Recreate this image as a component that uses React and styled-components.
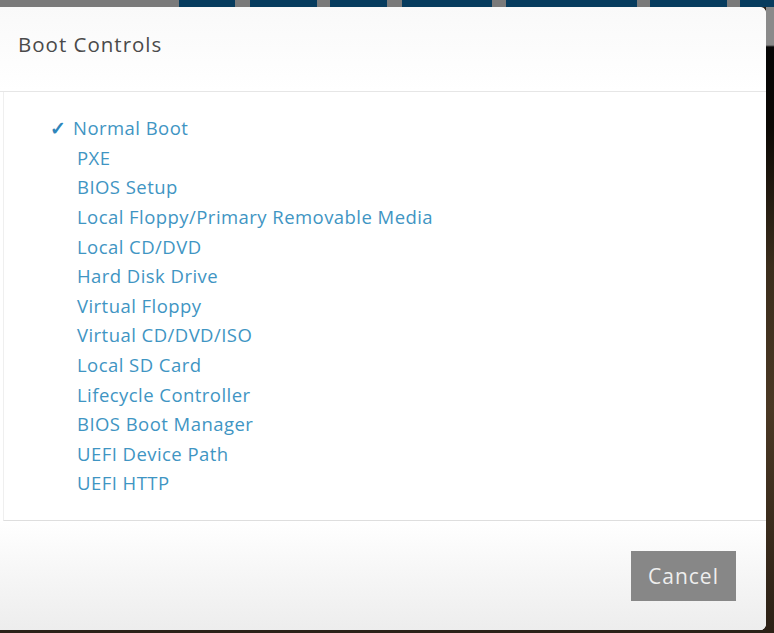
import React from "react";
import styled, { createGlobalStyle } from "styled-components";

const GlobalStyle = createGlobalStyle`
  html, body {
    margin: 0;
    padding: 0;
    background: #2a2118;
    font-family: "Open Sans", "Lato", sans-serif;
  }
`;

const tabs = [
  { w: 179, blue: false },
  { w: 56, blue: true },
  { w: 15, blue: false },
  { w: 67, blue: true },
  { w: 13, blue: false },
  { w: 57, blue: true },
  { w: 15, blue: false },
  { w: 90, blue: true },
  { w: 14, blue: false },
  { w: 131, blue: true },
  { w: 13, blue: false },
  { w: 77, blue: true },
  { w: 13, blue: false },
  { w: 34, blue: true },
];

const options = [
  "Normal Boot",
  "PXE",
  "BIOS Setup",
  "Local Floppy/Primary Removable Media",
  "Local CD/DVD",
  "Hard Disk Drive",
  "Virtual Floppy",
  "Virtual CD/DVD/ISO",
  "Local SD Card",
  "Lifecycle Controller",
  "BIOS Boot Manager",
  "UEFI Device Path",
  "UEFI HTTP",
];

const App = () => {
  const selected = "Normal Boot";

  return (
    <StyledPage>
      <GlobalStyle />
      <StyledTopStrip>
        {tabs.map((t, i) => (
          <StyledTab key={i} blue={t.blue} style={{ width: t.w }} />
        ))}
      </StyledTopStrip>

      <StyledStage>
        <StyledDialog>
          <StyledHeader>
            <StyledTitle>Boot Controls</StyledTitle>
          </StyledHeader>

          <StyledBody>
            {options.map((name) => (
              <StyledOption key={name}>
                <StyledMark checked={name === selected}>
                  {name === selected ? "✓" : ""}
                </StyledMark>
                {name}
              </StyledOption>
            ))}
          </StyledBody>

          <StyledFooter>
            <StyledCancel>Cancel</StyledCancel>
          </StyledFooter>
        </StyledDialog>
        <StyledSide />
      </StyledStage>
    </StyledPage>
  );
};
export default App;

const StyledPage = styled.div`
  width: 774px;
  height: 633px;
  overflow: hidden;
  display: flex;
  flex-direction: column;
`;

const StyledTopStrip = styled.div`
  height: 7px;
  display: flex;
  background: #7a7a7a;
`;

const StyledTab = styled.div`
  height: 100%;
  flex-shrink: 0;
  background: ${props => (props.blue ? "#073c5e" : "#7a7a7a")};
`;

const StyledStage = styled.div`
  flex: 1;
  display: flex;
`;

const StyledDialog = styled.div`
  width: 766px;
  height: 623px;
  background: #fff;
  border-radius: 0 6px 6px 0;
  display: flex;
  flex-direction: column;
`;

const StyledSide = styled.div`
  flex: 1;
  background: linear-gradient(
    to bottom,
    #8a8a8a 0px,
    #8a8a8a 38px,
    #050505 40px,
    #0c0905 120px,
    #3b2d1c 260px,
    #4a3824 400px,
    #2c2116 623px
  );
`;

const StyledHeader = styled.div`
  height: 85px;
  box-sizing: border-box;
  padding: 24px 0 0 18px;
  background: linear-gradient(to bottom, #f9f9f9, #ffffff);
  border-bottom: 1px solid #e6e6e6;
  border-radius: 0 6px 0 0;
`;

const StyledTitle = styled.h2`
  margin: 0;
  font-size: 20.5px;
  font-weight: 400;
  line-height: 26px;
  letter-spacing: 1px;
  color: #4a4a4a;
`;

const StyledBody = styled.div`
  height: 429px;
  box-sizing: border-box;
  padding: 21px 0 0 46px;
  border-bottom: 1px solid #dedede;
  border-left: 1px solid #efefef;
  margin-left: 3px;
`;

const StyledOption = styled.div`
  display: flex;
  align-items: center;
  height: 29.6px;
  font-size: 18.5px;
  letter-spacing: 0.45px;
  color: #3f95c3;
  cursor: pointer;
`;

const StyledMark = styled.span`
  flex-shrink: 0;
  width: ${props => (props.checked ? "23px" : "27px")};
  font-size: 19px;
  font-weight: 700;
  color: #2f86bb;
`;

const StyledFooter = styled.div`
  flex: 1;
  display: flex;
  justify-content: flex-end;
  align-items: flex-start;
  padding: 30px 30px 0 0;
  background: linear-gradient(to bottom, #ffffff, #ededed);
  border-radius: 0 0 6px 0;
`;

const StyledCancel = styled.button`
  width: 105px;
  height: 50px;
  padding: 0;
  border: none;
  background: #878787;
  color: #eeeeee;
  font-family: "Open Sans", "Lato", sans-serif;
  font-size: 21px;
  letter-spacing: 1px;
  cursor: pointer;
`;
